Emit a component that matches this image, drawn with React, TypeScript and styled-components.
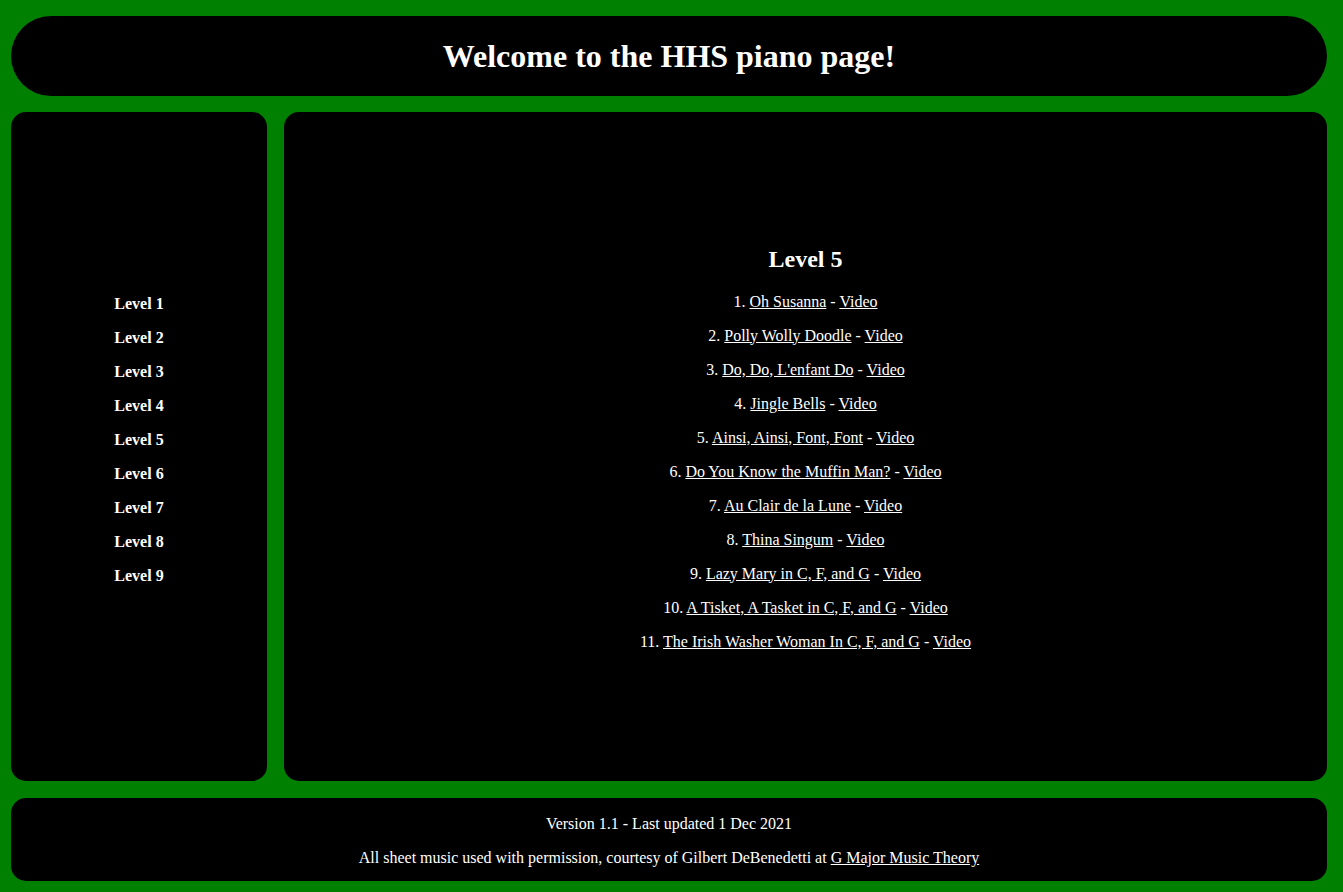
import React from "react";
import styled, { createGlobalStyle } from "styled-components";

const Global = createGlobalStyle`
  html, body { margin: 0; padding: 0; }
  body {
    background: #008000;
    font-family: "Liberation Serif", "Times New Roman", serif;
    color: #ffffff;
  }
`;

const Page = styled.div`
  box-sizing: border-box;
  width: 1343px;
  height: 892px;
  padding: 16px 16px 11px 11px;
  display: grid;
  grid-template-columns: 256px 1fr;
  grid-template-rows: 80px 669px 84px;
  column-gap: 17px;
  row-gap: 16px;
`;

const Header = styled.header`
  grid-column: 1 / 3;
  background: #000;
  border-radius: 40px;
  display: flex;
  align-items: center;
  justify-content: center;
`;

const Title = styled.h1`
  margin: 0;
  font-size: 32px;
  font-weight: bold;
  line-height: 37px;
`;

const Sidebar = styled.nav`
  background: #000;
  border-radius: 15px;
  display: flex;
  flex-direction: column;
  align-items: center;
  justify-content: center;
  padding-bottom: 13px;
`;

const NavLink = styled.a`
  color: #fff;
  text-decoration: none;
  font-weight: bold;
  font-size: 16px;
  line-height: 18px;
  margin: 8px 0;
`;

const Main = styled.main`
  background: #000;
  border-radius: 15px;
  display: flex;
  flex-direction: column;
  align-items: center;
  justify-content: center;
  padding-top: 10px;
`;

const LevelTitle = styled.h2`
  margin: 0 0 12px;
  font-size: 24px;
  line-height: 28px;
  font-weight: bold;
`;

const Item = styled.p`
  margin: 8px 0;
  font-size: 16px;
  line-height: 18px;
`;

const Link = styled.a`
  color: #fff;
  text-decoration: underline;
`;

const Footer = styled.footer`
  grid-column: 1 / 3;
  margin-top: 1px;
  background: #000;
  border-radius: 15px;
  display: flex;
  flex-direction: column;
  align-items: center;
  justify-content: center;
  padding-top: 3px;
`;

const FootLine = styled.p`
  margin: 8px 0;
  font-size: 16px;
  line-height: 18px;
`;

const songs = [
  "Oh Susanna",
  "Polly Wolly Doodle",
  "Do, Do, L'enfant Do",
  "Jingle Bells",
  "Ainsi, Ainsi, Font, Font",
  "Do You Know the Muffin Man?",
  "Au Clair de la Lune",
  "Thina Singum",
  "Lazy Mary in C, F, and G",
  "A Tisket, A Tasket in C, F, and G",
  "The Irish Washer Woman In C, F, and G",
];

export default function App() {
  return (
    <>
      <Global />
      <Page>
        <Header>
          <Title>Welcome to the HHS piano page!</Title>
        </Header>
        <Sidebar>
          {Array.from({ length: 9 }, (_, i) => (
            <NavLink key={i} href="#">
              Level {i + 1}
            </NavLink>
          ))}
        </Sidebar>
        <Main>
          <LevelTitle>Level 5</LevelTitle>
          {songs.map((s, i) => (
            <Item key={s}>
              {i + 1}. <Link href="#">{s}</Link> - <Link href="#">Video</Link>
            </Item>
          ))}
        </Main>
        <Footer>
          <FootLine>Version 1.1 - Last updated 1 Dec 2021</FootLine>
          <FootLine>
            All sheet music used with permission, courtesy of Gilbert DeBenedetti at{" "}
            <Link href="#">G Major Music Theory</Link>
          </FootLine>
        </Footer>
      </Page>
    </>
  );
}
